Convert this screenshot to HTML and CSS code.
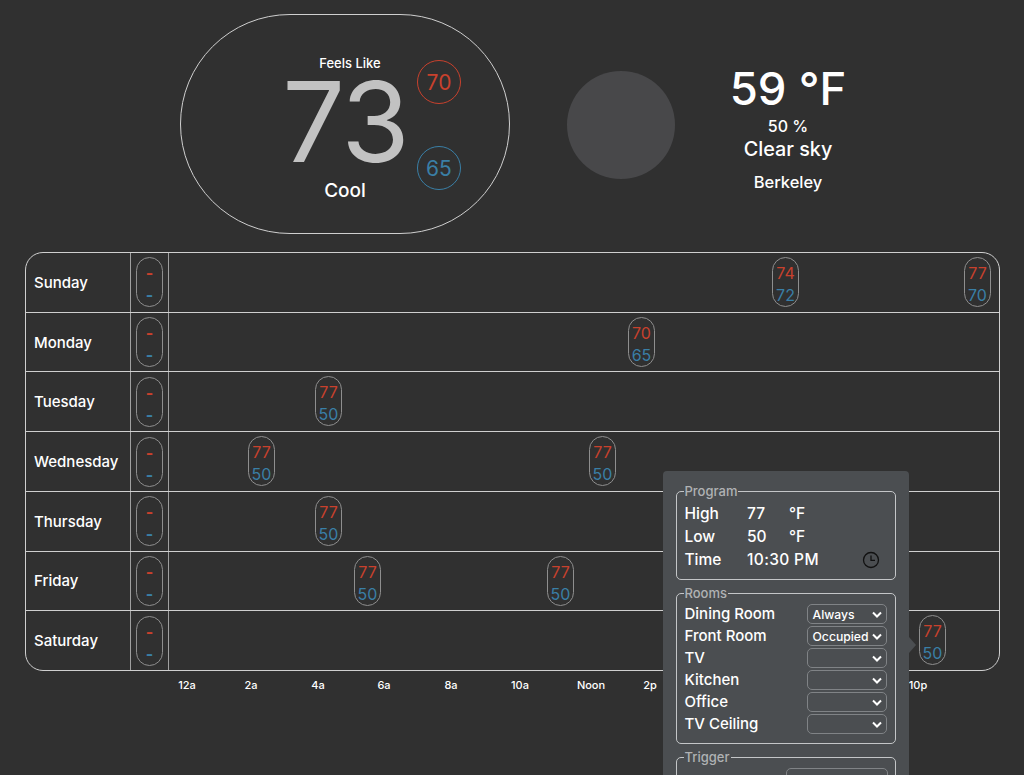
FILE: index.html
```html
<!DOCTYPE html>
<html lang="en">
<head>
<meta charset="utf-8">
<title>Thermostat</title>
<link rel="stylesheet" href="styles.css">
</head>
<body>
<div class="page">
  <header class="top">
    <section class="stat">
      <div class="feels">Feels Like</div>
      <div class="temp">73</div>
      <div class="mode">Cool</div>
      <div class="setpoint high">70</div>
      <div class="setpoint low">65</div>
    </section>
    <div class="sun"></div>
    <section class="weather">
      <div class="w-temp">59 °F</div>
      <div class="w-hum">50 %</div>
      <div class="w-desc">Clear sky</div>
      <div class="w-city">Berkeley</div>
    </section>
  </header>

  <section class="schedule">
    <div class="row">
      <div class="day">Sunday</div>
      <div class="base"><div class="pill base-pill"><span class="hi">-</span><span class="lo">-</span></div></div>
      <div class="line">
        <div class="pill at" style="left:603px"><span class="hi">74</span><span class="lo">72</span></div>
        <div class="pill at" style="left:795px"><span class="hi">77</span><span class="lo">70</span></div>
      </div>
    </div>
    <div class="row">
      <div class="day">Monday</div>
      <div class="base"><div class="pill base-pill"><span class="hi">-</span><span class="lo">-</span></div></div>
      <div class="line">
        <div class="pill at" style="left:459px"><span class="hi">70</span><span class="lo">65</span></div>
      </div>
    </div>
    <div class="row">
      <div class="day">Tuesday</div>
      <div class="base"><div class="pill base-pill"><span class="hi">-</span><span class="lo">-</span></div></div>
      <div class="line">
        <div class="pill at" style="left:146px"><span class="hi">77</span><span class="lo">50</span></div>
      </div>
    </div>
    <div class="row">
      <div class="day">Wednesday</div>
      <div class="base"><div class="pill base-pill"><span class="hi">-</span><span class="lo">-</span></div></div>
      <div class="line">
        <div class="pill at" style="left:79px"><span class="hi">77</span><span class="lo">50</span></div>
        <div class="pill at" style="left:420px"><span class="hi">77</span><span class="lo">50</span></div>
      </div>
    </div>
    <div class="row">
      <div class="day">Thursday</div>
      <div class="base"><div class="pill base-pill"><span class="hi">-</span><span class="lo">-</span></div></div>
      <div class="line">
        <div class="pill at" style="left:146px"><span class="hi">77</span><span class="lo">50</span></div>
      </div>
    </div>
    <div class="row">
      <div class="day">Friday</div>
      <div class="base"><div class="pill base-pill"><span class="hi">-</span><span class="lo">-</span></div></div>
      <div class="line">
        <div class="pill at" style="left:185px"><span class="hi">77</span><span class="lo">50</span></div>
        <div class="pill at" style="left:378px"><span class="hi">77</span><span class="lo">50</span></div>
      </div>
    </div>
    <div class="row">
      <div class="day">Saturday</div>
      <div class="base"><div class="pill base-pill"><span class="hi">-</span><span class="lo">-</span></div></div>
      <div class="line">
        <div class="pill at" style="left:750px"><span class="hi">77</span><span class="lo">50</span></div>
      </div>
    </div>
  </section>

  <div class="axis">
    <span class="tick" style="left:187px">12a</span>
    <span class="tick" style="left:251px">2a</span>
    <span class="tick" style="left:318px">4a</span>
    <span class="tick" style="left:384px">6a</span>
    <span class="tick" style="left:451px">8a</span>
    <span class="tick" style="left:520px">10a</span>
    <span class="tick" style="left:591px">Noon</span>
    <span class="tick" style="left:650px">2p</span>
    <span class="tick" style="left:918px">10p</span>
  </div>

  <aside class="popover">
    <span class="arrow"></span>
    <fieldset class="group program">
      <legend>Program</legend>
      <div class="prog-row"><span class="prog-label">High</span><span class="prog-val">77</span><span>°F</span></div>
      <div class="prog-row"><span class="prog-label">Low</span><span class="prog-val">50</span><span>°F</span></div>
      <div class="prog-row">
        <span class="prog-label">Time</span><span class="prog-time">10:30 PM</span>
        <svg class="clock" width="18" height="18" viewBox="0 0 18 18" aria-hidden="true"><circle cx="9" cy="9" r="7.5"/><path d="M9 4.5V9.4H13"/></svg>
      </div>
    </fieldset>
    <fieldset class="group rooms">
      <legend>Rooms</legend>
      <div class="room"><span>Dining Room</span><span class="select">Always<svg class="chev" width="10" height="7" viewBox="0 0 10 7" aria-hidden="true"><path d="M1 1.5L5 5.5L9 1.5"/></svg></span></div>
      <div class="room"><span>Front Room</span><span class="select">Occupied<svg class="chev" width="10" height="7" viewBox="0 0 10 7" aria-hidden="true"><path d="M1 1.5L5 5.5L9 1.5"/></svg></span></div>
      <div class="room"><span>TV</span><span class="select"><svg class="chev" width="10" height="7" viewBox="0 0 10 7" aria-hidden="true"><path d="M1 1.5L5 5.5L9 1.5"/></svg></span></div>
      <div class="room"><span>Kitchen</span><span class="select"><svg class="chev" width="10" height="7" viewBox="0 0 10 7" aria-hidden="true"><path d="M1 1.5L5 5.5L9 1.5"/></svg></span></div>
      <div class="room"><span>Office</span><span class="select"><svg class="chev" width="10" height="7" viewBox="0 0 10 7" aria-hidden="true"><path d="M1 1.5L5 5.5L9 1.5"/></svg></span></div>
      <div class="room"><span>TV Ceiling</span><span class="select"><svg class="chev" width="10" height="7" viewBox="0 0 10 7" aria-hidden="true"><path d="M1 1.5L5 5.5L9 1.5"/></svg></span></div>
    </fieldset>
    <fieldset class="group trigger">
      <legend>Trigger</legend>
      <div class="trigger-box"></div>
    </fieldset>
  </aside>
</div>
</body>
</html>
```
FILE: styles.css
```css
* { box-sizing: border-box; }
html, body { margin: 0; height: 775px; overflow: hidden; }
body {
  background: #303030;
  color: #fff;
  font-family: Inter, "Liberation Sans", sans-serif;
  font-weight: 450;
}
.page { position: relative; height: 775px; overflow: hidden; }

/* header */
.top {
  display: flex;
  align-items: flex-start;
  height: 252px;
  padding: 14px 0 0 180px;
}
.stat {
  position: relative;
  width: 330px;
  height: 220px;
  border: 1px solid #cfcfcf;
  border-radius: 110px;
  display: flex;
  flex-direction: column;
  align-items: center;
  padding-top: 40px;
}
.feels { font-size: 13px; line-height: 16px; margin-left: 10px; }
.temp {
  font-size: 111px;
  line-height: 84px;
  margin: 9px 0 16px;
  font-weight: 400;
  color: #c2c2c2;
  letter-spacing: -2px;
}
.mode { font-size: 19px; line-height: 22px; }
.setpoint {
  position: absolute;
  left: 236px;
  width: 44px;
  height: 44px;
  border-radius: 50%;
  border: 1px solid currentColor;
  font-size: 21px;
  font-weight: 400;
  display: flex;
  align-items: center;
  justify-content: center;
}
.setpoint.high { top: 45px; color: #c8412d; }
.setpoint.low { top: 131px; color: #3a7fa6; }
.sun {
  width: 108px;
  height: 108px;
  margin: 57px 0 0 57px;
  border-radius: 50%;
  background: #48484a;
  flex: none;
}
.weather {
  width: 230px;
  margin: 50px 0 0 -2px;
  display: flex;
  flex-direction: column;
  align-items: center;
}
.w-temp { font-size: 45.5px; line-height: 50px; }
.w-hum { font-size: 16px; line-height: 20px; margin-top: 2px; }
.w-desc { font-size: 19.8px; line-height: 26px; }
.w-city { font-size: 16.5px; line-height: 20px; margin-top: 10px; }

/* schedule */
.schedule {
  width: 975px;
  height: 419px;
  margin-left: 25px;
  border: 1px solid #cfcfcf;
  border-radius: 18px;
  display: flex;
  flex-direction: column;
  overflow: hidden;
}
.row {
  flex: 1 1 0;
  display: flex;
  min-height: 0;
  border-top: 1px solid #cfcfcf;
}
.row:first-child { border-top: 0; }
.day {
  width: 104px;
  padding-left: 8px;
  font-size: 15px;
  display: flex;
  align-items: center;
  flex: none;
}
.base {
  width: 39px;
  flex: none;
  border-left: 1px solid #a0a0a0;
  border-right: 1px solid #a0a0a0;
  display: flex;
  align-items: center;
  justify-content: center;
}
.line { position: relative; flex: 1; }
.pill {
  width: 27px;
  height: 50px;
  border: 1px solid #8e8e8e;
  border-radius: 14px;
  display: flex;
  flex-direction: column;
  align-items: center;
  gap: 2px;
  font-size: 16px;
  font-weight: 400;
  padding-top: 5px;
  line-height: 20px;
}
.base-pill { font-weight: 700; }
.at { position: absolute; top: 4px; }
.hi { color: #c8412d; }
.lo { color: #3a7fa6; }

/* axis */
.axis { position: relative; height: 24px; }
.tick {
  position: absolute;
  top: 7px;
  transform: translateX(-50%);
  font-size: 11px;
  font-weight: 500;
}

/* popover */
.popover {
  position: absolute;
  left: 663px;
  top: 471px;
  width: 246px;
  height: 420px;
  background: #4b4e51;
  border-radius: 4px;
  padding: 13px 13px;
  display: flex;
  flex-direction: column;
  gap: 6px;
}
.arrow {
  position: absolute;
  right: -7px;
  top: 166px;
  border-left: 7px solid #4b4e51;
  border-top: 8px solid transparent;
  border-bottom: 8px solid transparent;
}
.group {
  margin: 0;
  border: 1px solid #c4c6c8;
  border-radius: 5px;
  padding: 0 8px 0 7.5px;
  min-width: 0;
}
.group legend {
  padding: 0 1px;
  margin-left: -1px;
  font-size: 13px;
  line-height: 15px;
  color: #b0b2b4;
}
.program { height: 96px; padding-top: 3px; }
.prog-row {
  display: flex;
  align-items: center;
  height: 23px;
  font-size: 15.5px;
  position: relative;
}
.prog-label { width: 62.5px; }
.prog-val { width: 42px; }
.prog-time { letter-spacing: .35px; }
.clock {
  position: absolute;
  right: 7px;
  top: 3px;
  fill: none;
  stroke: #111;
  stroke-width: 1.3;
}
.rooms { height: 158px; padding-top: 1px; }
.room {
  display: flex;
  align-items: center;
  justify-content: space-between;
  height: 22px;
  font-size: 15px;
}
.select {
  position: relative;
  width: 80px;
  height: 20px;
  margin-top: 2px;
  border: 1px solid #808386;
  border-radius: 5px;
  padding-left: 4.5px;
  font-size: 12.2px;
  display: flex;
  align-items: center;
}
.chev {
  position: absolute;
  right: 4px;
  top: 6px;
  fill: none;
  stroke: #fff;
  stroke-width: 2;
}
.trigger { height: 120px; }
.trigger-box {
  width: 102px;
  height: 20px;
  margin: 3px -1px 0 auto;
  border: 1px solid #808386;
  border-radius: 5px;
}
```
